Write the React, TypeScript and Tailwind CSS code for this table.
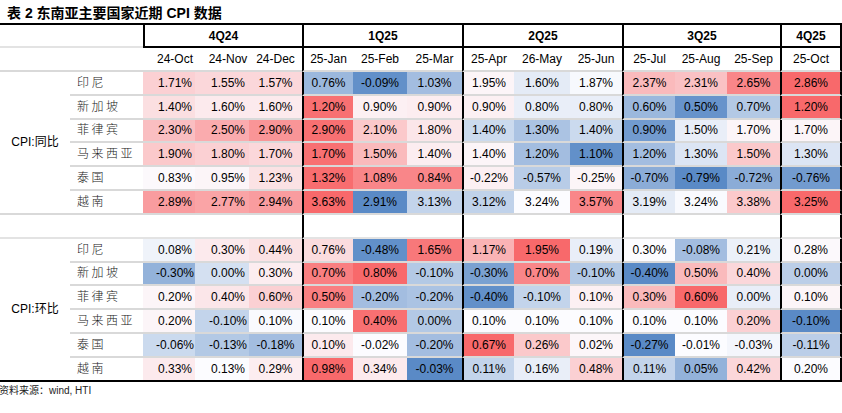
const months = [
  "24-Oct", "24-Nov", "24-Dec",
  "25-Jan", "25-Feb", "25-Mar",
  "25-Apr", "26-May", "25-Jun",
  "25-Jul", "25-Aug", "25-Sep",
  "25-Oct",
];

type Row = { name: string; values: string[]; heat: number[] };

const yoy: Row[] = [
  {
    name: "印尼",
    values: ["1.71%", "1.55%", "1.57%", "0.76%", "-0.09%", "1.03%", "1.95%", "1.60%", "1.87%", "2.37%", "2.31%", "2.65%", "2.86%"],
    heat: [0.3, 0.25, 0.25, -0.6, -0.95, -0.55, 0.05, -0.15, -0.03, 0.45, 0.4, 0.8, 1],
  },
  {
    name: "新加坡",
    values: ["1.40%", "1.60%", "1.60%", "1.20%", "0.90%", "0.90%", "0.90%", "0.80%", "0.80%", "0.60%", "0.50%", "0.70%", "1.20%"],
    heat: [0.2, 0.12, 0.12, 0.95, 0.08, 0.1, 0.08, -0.12, -0.12, -0.6, -0.92, -0.45, 1],
  },
  {
    name: "菲律宾",
    values: ["2.30%", "2.50%", "2.90%", "2.90%", "2.10%", "1.80%", "1.40%", "1.30%", "1.40%", "0.90%", "1.50%", "1.70%", "1.70%"],
    heat: [0.42, 0.55, 0.7, 0.95, 0.35, 0.15, -0.3, -0.5, -0.3, -0.85, -0.12, 0.05, 0.05],
  },
  {
    name: "马来西亚",
    values: ["1.90%", "1.80%", "1.70%", "1.70%", "1.50%", "1.40%", "1.40%", "1.20%", "1.10%", "1.20%", "1.30%", "1.50%", "1.30%"],
    heat: [0.35, 0.3, 0.25, 0.95, 0.45, 0.1, 0.05, -0.55, -0.95, -0.55, -0.2, 0.35, -0.2],
  },
  {
    name: "泰国",
    values: ["0.83%", "0.95%", "1.23%", "1.32%", "1.08%", "0.84%", "-0.22%", "-0.57%", "-0.25%", "-0.70%", "-0.79%", "-0.72%", "-0.76%"],
    heat: [0.02, 0.05, 0.18, 0.97, 0.8, 0.8, 0.08, -0.42, 0.05, -0.7, -1, -0.7, -0.85],
  },
  {
    name: "越南",
    values: ["2.89%", "2.77%", "2.94%", "3.63%", "2.91%", "3.13%", "3.12%", "3.24%", "3.57%", "3.19%", "3.24%", "3.38%", "3.25%"],
    heat: [0.65, 0.6, 0.65, 1, -1, -0.35, -0.37, 0, 0.8, -0.15, -0.02, 0.35, 1],
  },
];

const mom: Row[] = [
  {
    name: "印尼",
    values: ["0.08%", "0.30%", "0.44%", "0.76%", "-0.48%", "1.65%", "1.17%", "1.95%", "0.19%", "0.30%", "-0.08%", "0.21%", "0.28%"],
    heat: [-0.08, 0.12, 0.18, 0.22, -0.95, 0.9, 0.5, 1, -0.12, 0, -0.55, -0.1, 0.02],
  },
  {
    name: "新加坡",
    values: ["-0.30%", "0.00%", "0.30%", "0.70%", "0.80%", "-0.10%", "-0.30%", "0.70%", "-0.10%", "-0.40%", "0.50%", "0.40%", "0.00%"],
    heat: [-0.65, -0.25, 0.1, 0.85, 1, -0.45, -0.8, 0.8, -0.45, -1, 0.45, 0.25, -0.4],
  },
  {
    name: "菲律宾",
    values: ["0.20%", "0.40%", "0.60%", "0.50%", "-0.20%", "-0.20%", "-0.40%", "-0.10%", "0.10%", "0.30%", "0.60%", "0.00%", "0.10%"],
    heat: [0.05, 0.15, 0.3, 0.85, -0.55, -0.5, -0.95, -0.35, 0.08, 0.45, 1, -0.12, 0.05],
  },
  {
    name: "马来西亚",
    values: ["0.20%", "-0.10%", "0.10%", "0.10%", "0.40%", "0.00%", "0.10%", "0.10%", "0.10%", "0.10%", "0.10%", "0.20%", "-0.10%"],
    heat: [0.05, -0.35, -0.02, 0, 0.95, -0.45, 0, 0, 0, 0, 0, 0.3, -1],
  },
  {
    name: "泰国",
    values: ["-0.06%", "-0.13%", "-0.18%", "0.10%", "-0.02%", "-0.20%", "0.67%", "0.26%", "0.02%", "-0.27%", "-0.01%", "-0.03%", "-0.11%"],
    heat: [-0.3, -0.45, -0.55, 0.12, 0, -0.55, 1, 0.35, 0.04, -1, 0, -0.05, -0.4],
  },
  {
    name: "越南",
    values: ["0.33%", "0.13%", "0.29%", "0.98%", "0.34%", "-0.03%", "0.11%", "0.16%", "0.48%", "0.11%", "0.05%", "0.42%", "0.20%"],
    heat: [0.12, 0, 0.1, 1, 0.12, -1, -0.35, -0.12, 0.3, -0.35, -0.65, 0.25, 0],
  },
];

// excel-style 3 colour scale: blue -> white -> red
function heatColor(t: number) {
  const [r, g, b] = t >= 0 ? [248, 105, 107] : [90, 138, 198];
  const a = Math.min(1, Math.abs(t));
  const mix = (end: number, start: number) => Math.round(start + (end - start) * a);
  return `rgb(${mix(r, 252)}, ${mix(g, 252)}, ${mix(b, 255)})`;
}

const quarterStart = (i: number) => i === 3 || i === 6 || i === 9 || i === 12;

function edgeClass(i: number) {
  if (i === 12) return "border-l-2 border-l-black border-r-2 border-r-black";
  if (quarterStart(i)) return "border-l-2 border-l-black";
  return "";
}

function Block({ label, rows, last }: { label: string; rows: Row[]; last?: boolean }) {
  return (
    <>
      <div
        className={`row-span-6 col-span-1 flex items-center justify-center border-b-2 ${
          last ? "border-b-black" : "border-b-[#d9d9d9]"
        }`}
      >
        CPI:{label}
      </div>
      {rows.map((row, r) => {
        const bottom =
          last && r === rows.length - 1 ? "border-b-black" : "border-b-[#d9d9d9]";
        return (
          <div key={row.name} className="contents">
            <div
              className={`flex h-[23.8px] items-center border-b-2 pl-[7px] font-light tracking-[2.5px] text-[#222] ${bottom}`}
            >
              {row.name}
            </div>
            {row.values.map((v, i) => (
              <div
                key={i}
                className={`flex h-[23.8px] items-center justify-center border-b-2 ${bottom} ${edgeClass(i)} ${
                  i < 2 ? "pl-3" : ""
                }`}
                style={{ backgroundColor: heatColor(row.heat[i]) }}
              >
                {v}
              </div>
            ))}
          </div>
        );
      })}
    </>
  );
}

export default function App() {
  return (
    <div className="h-[413px] w-[842px] overflow-hidden bg-white font-['Liberation_Sans','Noto_Sans_CJK_SC',sans-serif] text-[12px] text-black">
      <div className="flex h-[23px] items-end pb-[2px] pl-[7px] font-['Liberation_Sans','Noto_Sans_CJK_SC',sans-serif] text-[14px] font-bold leading-[16px]">
        表 2 东南亚主要国家近期 CPI 数据
      </div>

      <div className="grid grid-cols-[70px_73px_52px_54px_53px_51px_54px_55px_52px_56px_52px_53px_52px_53px_62px] border-t-2 border-t-black">
        {/* quarter header */}
        <div className="col-span-2 h-[23px] border-b-2 border-b-[#e3e3e3]" />
        <div className="col-span-3 flex h-[23px] items-center justify-center border-b-2 border-l-2 border-b-black border-l-black font-bold">
          4Q24
        </div>
        <div className="col-span-3 flex h-[23px] items-center justify-center border-b-2 border-l-2 border-b-black border-l-black font-bold">
          1Q25
        </div>
        <div className="col-span-3 flex h-[23px] items-center justify-center border-b-2 border-l-2 border-b-black border-l-black font-bold">
          2Q25
        </div>
        <div className="col-span-3 flex h-[23px] items-center justify-center border-b-2 border-l-2 border-b-black border-l-black font-bold">
          3Q25
        </div>
        <div className="flex h-[23px] items-center justify-center border-b-2 border-l-2 border-r-2 border-b-black border-l-black border-r-black font-bold">
          4Q25
        </div>

        {/* month header */}
        <div className="col-span-2 h-[24px] border-b-2 border-b-[#d9d9d9]" />
        {months.map((m, i) => (
          <div
            key={m}
            className={`flex h-[24px] items-center justify-center border-b-2 border-b-[#d9d9d9] ${edgeClass(i)} ${
              i < 2 ? "pl-3" : ""
            }`}
          >
            {m}
          </div>
        ))}

        <Block label="同比" rows={yoy} />

        {/* spacer between the two blocks */}
        <div className="col-span-5 h-[24px] border-b-2 border-b-[#e3e3e3]" />
        <div className="col-span-3 h-[24px] border-b-2 border-l-2 border-b-[#e3e3e3] border-l-black" />
        <div className="col-span-3 h-[24px] border-b-2 border-l-2 border-b-[#e3e3e3] border-l-black" />
        <div className="col-span-3 h-[24px] border-b-2 border-l-2 border-b-[#e3e3e3] border-l-black" />
        <div className="h-[24px] border-b-2 border-l-2 border-r-2 border-b-[#e3e3e3] border-l-black border-r-black" />

        <Block label="环比" rows={mom} last />
      </div>

      <div className="ml-[-1px] font-['Noto_Sans_CJK_SC',sans-serif] text-[10px] leading-[16px] text-[#222]">
        资料来源：<span className="font-['Liberation_Sans',sans-serif] text-[10px]">wind, HTI</span>
      </div>
    </div>
  );
}
